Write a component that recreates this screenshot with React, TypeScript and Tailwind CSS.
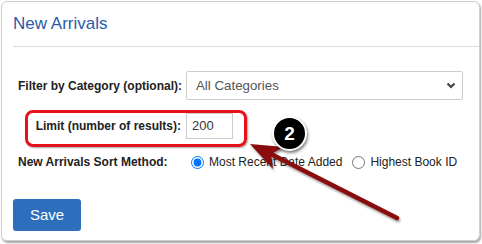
export default function App() {
  return (
    <div className="relative w-[482px] h-[244px] bg-white font-['Liberation_Sans',Arial,sans-serif]">
      <div className="ml-px mt-px w-[479px] h-[240px] border border-[#cfcfcf] rounded-[6px] shadow-[1px_2px_2px_rgba(0,0,0,0.35)] bg-white">
        <div className="ml-[11px] h-[45px] flex items-center border-b border-[#dcdcdc]">
          <h1 className="text-[17px] leading-[20px] text-[#2b5aa8]">New Arrivals</h1>
        </div>

        <div className="pl-[16px] pt-[24px]">
          <div className="flex items-center h-[29px]">
            <label className="w-[168px] pr-[5px] text-right text-[12px] font-bold text-[#222] whitespace-nowrap">
              Filter by Category (optional):
            </label>
            <div className="w-[277px] h-[29px] border border-[#cccccc] rounded-[2px] flex items-center justify-between pl-[9px] pr-[6px]">
              <span className="text-[13.3px] text-[#555]">All Categories</span>
              <svg width="10" height="7" viewBox="0 0 10 7">
                <polyline points="1.5,1.5 5,5 8.5,1.5" fill="none" stroke="#444" strokeWidth="2.2" />
              </svg>
            </div>
          </div>

          <div className="flex items-center h-[26px] mt-[13px]">
            <label className="w-[168px] pr-[5px] text-right text-[12px] font-bold text-[#222] whitespace-nowrap">
              Limit (number of results):
            </label>
            <div className="w-[47px] h-[26px] border border-[#cccccc] flex items-center pl-[5px]">
              <span className="text-[13px] text-[#333]">200</span>
            </div>
          </div>

          <div className="flex items-center h-[16px] mt-[15px]">
            <label className="w-[168px] text-[12px] font-bold text-[#222] whitespace-nowrap">
              New Arrivals Sort Method:
            </label>
            <div className="flex items-center ml-[5px] text-[12px] text-[#222]">
              <input type="radio" checked readOnly className="w-[13px] h-[13px]" />
              <span className="ml-[5px]">Most Recent Date Added</span>
              <input type="radio" readOnly className="w-[13px] h-[13px] ml-[10px]" />
              <span className="ml-[5px]">Highest Book ID</span>
            </div>
          </div>
        </div>

        <div className="pl-[11px] mt-[29px]">
          <button className="w-[68px] h-[32px] rounded-[3px] bg-[#2d6ebd] text-white text-[15px]">Save</button>
        </div>
      </div>

      <div className="absolute left-[25px] top-[109px] w-[222px] h-[37px] border-[3px] border-[#e5121c] rounded-[8px] shadow-[1px_1px_2px_rgba(0,0,0,0.35)] pointer-events-none" />

      <svg className="absolute left-0 top-0 pointer-events-none drop-shadow-[1px_2px_1px_rgba(0,0,0,0.4)]" width="482" height="244" viewBox="0 0 482 244">
        <line x1="397" y1="217" x2="271" y2="153" stroke="#8a0c0c" strokeWidth="4.5" strokeLinecap="round" />
        <polygon points="250,143 284,146 271,153 273,168" fill="#8a0c0c" />
      </svg>

      <div className="absolute left-[272px] top-[115px] w-[35px] h-[35px] rounded-full bg-black border-2 border-white shadow-[1px_2px_3px_rgba(0,0,0,0.5)] flex items-center justify-center">
        <span className="text-white font-bold text-[19px] leading-none">2</span>
      </div>
    </div>
  );
}
